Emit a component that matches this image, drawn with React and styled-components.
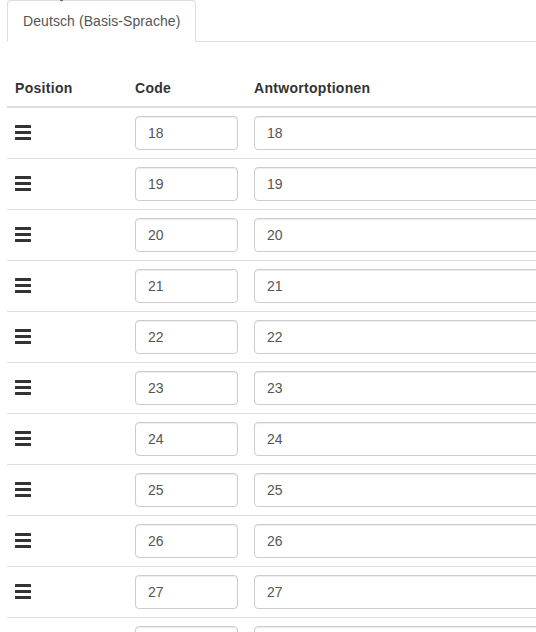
import React from "react";
import styled, { createGlobalStyle } from "styled-components";

const GlobalStyle = createGlobalStyle`
  html, body {
    margin: 0;
    padding: 0;
    overflow: hidden;
    background: #fff;
  }
  body {
    font-family: "Liberation Sans", Arial, sans-serif;
    font-size: 14px;
    line-height: 1.42857;
    color: #333;
  }
`;

const Page = styled.div`
  position: relative;
  padding-left: 7px;
  width: 760px;
`;

const Tabs = styled.ul`
  display: flex;
  list-style: none;
  margin: 0;
  padding: 0;
  border-bottom: 1px solid #ddd;
`;

const Tab = styled.li`
  margin-bottom: -1px;
  padding: 10px 15px;
  border: 1px solid ${(p) => (p.active ? "#ddd" : "transparent")};
  border-bottom-color: ${(p) => (p.active ? "#fff" : "transparent")};
  border-radius: 4px 4px 0 0;
  background: #fff;
  color: #555;
  line-height: 20px;
  letter-spacing: 0.08px;
`;

const Table = styled.table`
  margin-top: 28px;
  width: 100%;
  border-collapse: collapse;
  border-spacing: 0;
`;

const Th = styled.th`
  width: ${(p) => p.width || "auto"};
  padding: 8px;
  text-align: left;
  font-weight: bold;
  line-height: 20px;
  letter-spacing: 0.3px;
  border-bottom: 2px solid #ddd;
`;

const Td = styled.td`
  padding: 8px;
  border-top: 1px solid #ddd;
  vertical-align: middle;
`;

const Input = styled.input`
  display: block;
  box-sizing: border-box;
  width: 100%;
  height: 34px;
  padding: 6px 12px;
  font-family: inherit;
  font-size: 14px;
  line-height: 20px;
  color: #555;
  background: #fff;
  border: 1px solid #ccc;
  border-radius: 4px;
  box-shadow: inset 0 1px 1px rgba(0, 0, 0, 0.075);
  outline: none;
`;

const Handle = styled.svg`
  display: block;
  margin-top: -2px;
`;

const Cursor = styled.svg`
  position: absolute;
  left: 54px;
  top: -6px;
`;

const BarsIcon = () => (
  <Handle width="16" height="15" viewBox="0 0 16 15">
    <rect x="0" y="0" width="16" height="3" rx="0.5" fill="#333" />
    <rect x="0" y="6" width="16" height="3" rx="0.5" fill="#333" />
    <rect x="0" y="12" width="16" height="3" rx="0.5" fill="#333" />
  </Handle>
);

const rows = [18, 19, 20, 21, 22, 23, 24, 25, 26, 27, 28];

export default function App() {
  return (
    <>
      <GlobalStyle />
      <Page>
        <Cursor width="14" height="12" viewBox="0 0 14 12">
          <path d="M1 0 L1 3 L4 1 L7 7 L9 6 L6 0 Z" fill="#fff" stroke="#444" strokeWidth="1" />
        </Cursor>
        <Tabs>
          <Tab active>Deutsch (Basis-Sprache)</Tab>
        </Tabs>
        <Table>
          <thead>
            <tr>
              <Th width="104px">Position</Th>
              <Th width="103px">Code</Th>
              <Th>Antwortoptionen</Th>
            </tr>
          </thead>
          <tbody>
            {rows.map((n) => (
              <tr key={n}>
                <Td>
                  <BarsIcon />
                </Td>
                <Td>
                  <Input defaultValue={n} />
                </Td>
                <Td>
                  <Input defaultValue={n} />
                </Td>
              </tr>
            ))}
          </tbody>
        </Table>
      </Page>
    </>
  );
}
